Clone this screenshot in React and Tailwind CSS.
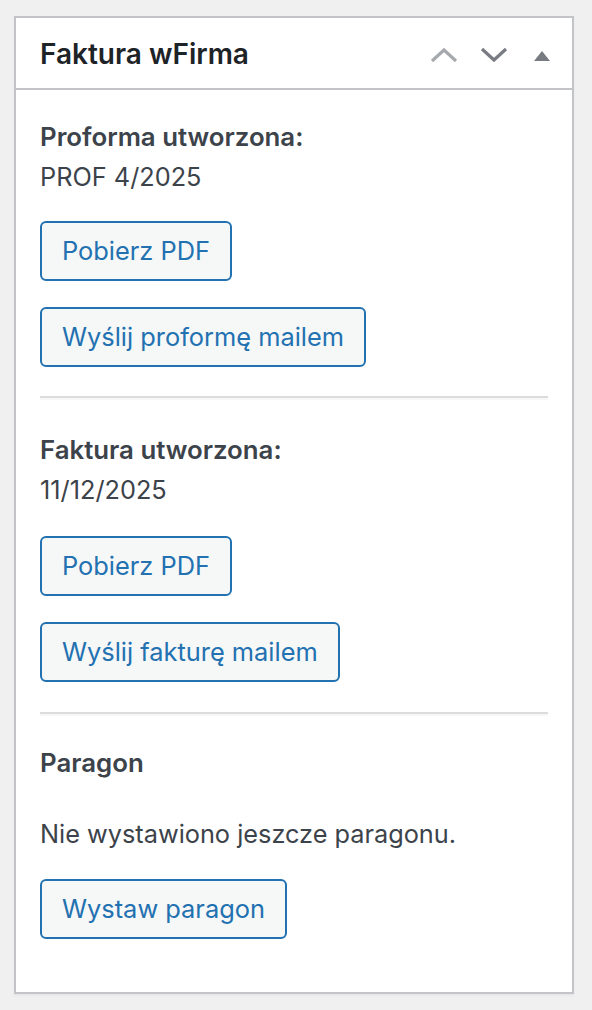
import React from "react";

const Btn = ({ children, className = "" }) => (
    <button className={`h-[60px] px-[20px] border-2 border-[#2271b1] rounded-[6px] bg-[#f6f7f7] text-[#2271b1] text-[25.4px] leading-none ${className}`}>
        {children}
    </button>
);

const Hr = () => <div className="h-[4px] border-t-2 border-[#dcdcde] border-b-2 border-b-[#f6f7f7]"></div>;

export default function App() {
    return (
        <div className="min-h-[1010px] bg-[#f0f0f1] pt-[16px] pl-[14px]" style={{ fontFamily: "Inter, 'Noto Sans', sans-serif" }}>
            <div className="w-[560px] bg-white border-2 border-[#c3c4c7] shadow-[0_2px_2px_rgba(0,0,0,0.04)]">
                <div className="h-[72px] flex items-center justify-between pl-[24px] pr-[18px] border-b-2 border-[#c3c4c7]">
                    <h2 className="text-[28px] font-semibold text-[#1d2327] mt-[2px]">Faktura wFirma</h2>
                    <div className="flex items-center gap-[22px] mt-[3px]">
                        <svg width="28" height="16" viewBox="0 0 28 16" fill="none">
                            <path d="M2 14 L14 3 L26 14" stroke="#a7aaad" strokeWidth="3.2" />
                        </svg>
                        <svg width="28" height="16" viewBox="0 0 28 16" fill="none">
                            <path d="M2 2 L14 13 L26 2" stroke="#787c82" strokeWidth="3.2" />
                        </svg>
                        <svg width="24" height="16" viewBox="0 0 24 16">
                            <path d="M4 14 L12 4 L20 14 Z" fill="#787c82" />
                        </svg>
                    </div>
                </div>
                <div className="px-[24px] pt-[27px] pb-[53px] text-[#3c434a] text-[25.3px]">
                    <div className="leading-[40px]">
                        <div className="font-semibold text-[25.8px]">Proforma utworzona:</div>
                        <div>PROF 4/2025</div>
                    </div>
                    <div className="flex flex-col items-start gap-[26px] mt-[24px]">
                        <Btn>Pobierz PDF</Btn>
                        <Btn>Wyślij proformę mailem</Btn>
                    </div>
                    <div className="mt-[29px]"><Hr /></div>
                    <div className="leading-[40px] mt-[30px]">
                        <div className="font-semibold text-[25.8px]">Faktura utworzona:</div>
                        <div>11/12/2025</div>
                    </div>
                    <div className="flex flex-col items-start gap-[26px] mt-[26px]">
                        <Btn>Pobierz PDF</Btn>
                        <Btn>Wyślij fakturę mailem</Btn>
                    </div>
                    <div className="mt-[30px]"><Hr /></div>
                    <div className="leading-[40px] mt-[27px] font-semibold text-[25.8px]">Paragon</div>
                    <div className="leading-[40px] mt-[31px]">Nie wystawiono jeszcze paragonu.</div>
                    <div className="mt-[25px]">
                        <Btn>Wystaw paragon</Btn>
                    </div>
                </div>
            </div>
        </div>
    );
}
